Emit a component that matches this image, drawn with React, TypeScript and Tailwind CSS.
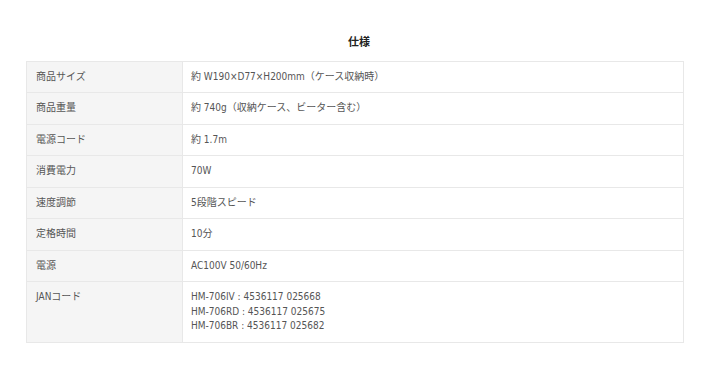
const specs: { label: string; value: string[] }[] = [
  { label: '商品サイズ', value: ['約 W190×D77×H200mm（ケース収納時）'] },
  { label: '商品重量', value: ['約 740g（収納ケース、ビーター含む）'] },
  { label: '電源コード', value: ['約 1.7m'] },
  { label: '消費電力', value: ['70W'] },
  { label: '速度調節', value: ['5段階スピード'] },
  { label: '定格時間', value: ['10分'] },
  { label: '電源', value: ['AC100V 50/60Hz'] },
  {
    label: 'JANコード',
    value: ['HM-706IV : 4536117 025668', 'HM-706RD : 4536117 025675', 'HM-706BR : 4536117 025682'],
  },
]

export default function App() {
  return (
    <div className="w-[718px] h-[371px] bg-white font-['DejaVu_Sans_Condensed','DejaVu_Sans','Noto_Sans_CJK_JP',sans-serif] text-[#555] text-[10px] leading-[14.5px]">
      <div className="pt-[36px] px-[26px]">
        <h2 className="text-center text-[11px] font-bold text-[#222] mb-[10px]">仕様</h2>
        <table className="w-[658px] border-collapse">
          <tbody>
            {specs.map(row => (
              <tr key={row.label}>
                <th className="w-[156px] bg-[#f5f5f5] border border-[#e8e8e8] text-left font-normal align-top px-[9px] py-[8px]">
                  {row.label}
                </th>
                <td className="border border-[#e8e8e8] align-top px-[8px] py-[8px]">
                  {row.value.map(v => (
                    <div key={v}>{v}</div>
                  ))}
                </td>
              </tr>
            ))}
          </tbody>
        </table>
      </div>
    </div>
  )
}
